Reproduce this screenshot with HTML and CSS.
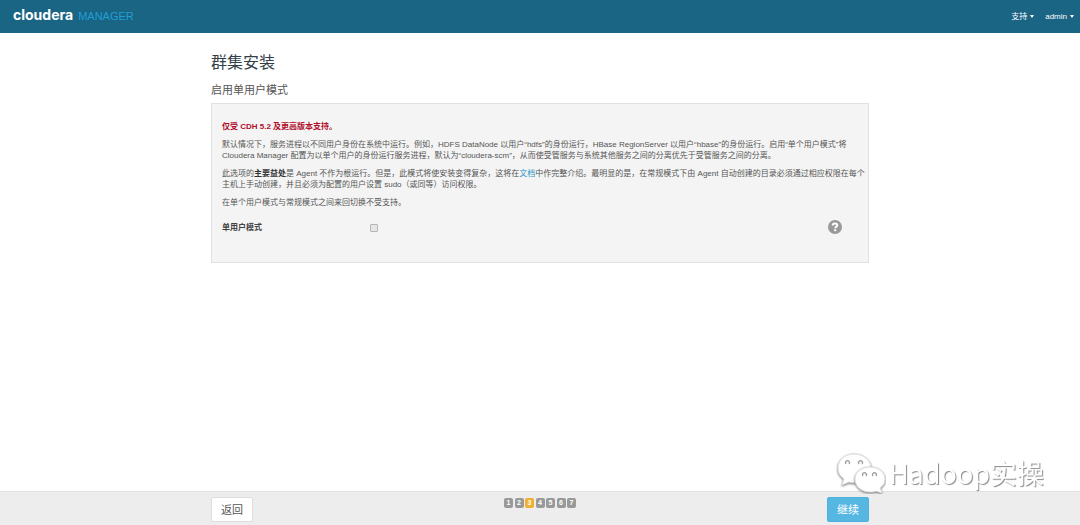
FILE: index.html
```html
<!DOCTYPE html>
<html lang="zh-CN">
<head>
<meta charset="utf-8">
<title>Cloudera Manager</title>
<link rel="stylesheet" href="styles.css">
</head>
<body>
<header class="topbar">
  <a class="brand" href="#"><span class="brand-name">cloudera</span><span class="brand-product">MANAGER</span></a>
  <nav class="topnav">
    <button class="menu" type="button">支持<span class="caret"></span></button>
    <button class="menu" type="button">admin<span class="caret"></span></button>
  </nav>
</header>

<main class="container content">
  <h1 class="title">群集安装</h1>
  <h2 class="subtitle">启用单用户模式</h2>
  <section class="panel">
    <p class="warning">仅受 CDH 5.2 及更高版本支持。</p>
    <p class="text">默认情况下，服务进程以不同用户身份在系统中运行。例如，HDFS DataNode 以用户“hdfs”的身份运行，HBase RegionServer 以用户“hbase”的身份运行。启用“单个用户模式”将 Cloudera Manager 配置为以单个用户的身份运行服务进程，默认为“cloudera-scm”，从而使受管服务与系统其他服务之间的分离优先于受管服务之间的分离。</p>
    <p class="text">此选项的<strong>主要益处</strong>是 Agent 不作为根运行。但是，此模式将使安装变得复杂，这将在<a class="link" href="#">文档</a>中作完整介绍。最明显的是，在常规模式下由 Agent 自动创建的目录必须通过相应权限在每个主机上手动创建，并且必须为配置的用户设置 sudo（或同等）访问权限。</p>
    <p class="text">在单个用户模式与常规模式之间来回切换不受支持。</p>
    <div class="field">
      <label class="field-label" for="single-user">单用户模式</label>
      <input class="checkbox" type="checkbox" id="single-user">
      <button class="help" type="button" aria-label="帮助">
        <svg viewBox="0 0 14 14" width="14" height="14"><circle cx="7" cy="7" r="7" fill="#999"/><path d="M4.700 5.500C4.700 4.100 5.600 3.400 7 3.400s2.300.7 2.300 1.900C9.300 6.700 7.200 6.600 7.200 8.300" fill="none" stroke="#fff" stroke-width="2"/><rect x="6.200" y="9.200" width="2" height="2" fill="#fff"/></svg>
      </button>
    </div>
  </section>
</main>

<footer class="footer">
  <div class="container actions">
    <button class="btn" type="button">返回</button>
    <ol class="steps">
      <li class="step">1</li><li class="step">2</li><li class="step current">3</li><li class="step">4</li><li class="step">5</li><li class="step">6</li><li class="step">7</li>
    </ol>
    <button class="btn primary" type="button">继续</button>
  </div>
</footer>

<div class="watermark">
  <svg class="watermark-icon" viewBox="0 0 50 42" width="50" height="42">
    <path class="bubble" d="M18 2C9 2 2 8 2 16c0 5 2 8 6 11l-2 6 7-3c3 1 7 1 10 0 7-2 12-7 12-14C35 8 27 2 18 2Z"/>
    <path class="bubble" d="M34 15c-8 0-15 5-15 12s6 13 15 13c2 0 4 0 6-1l6 2-2-5c3-2 5-5 5-9 0-7-7-12-15-12Z"/>
    <path fill="none" stroke="#999" stroke-width="1.300" d="M10 12a2 2 0 1 1 3 0M23 12a2 2 0 1 1 3 0M27 24a2 2 0 1 1 3 0M37 24a2 2 0 1 1 3 0"/>
  </svg>
  <span class="watermark-text">Hadoop实操</span>
</div>
</body>
</html>
```

FILE: styles.css
```css
* {
  box-sizing: border-box;
}

body {
  display: flex;
  flex-direction: column;
  min-height: 100vh;
  margin: 0;
  background: #fff;
  color: #555;
  font: 8px/11px "Liberation Sans", "Noto Sans CJK SC", sans-serif;
}

button {
  font-family: inherit;
  cursor: pointer;
}

.topbar {
  display: flex;
  align-items: center;
  justify-content: space-between;
  height: 33px;
  padding: 0 6px 0 13px;
  background: #1a6484;
}

.brand {
  display: flex;
  align-items: baseline;
  gap: 5px;
  padding-bottom: 2px;
  line-height: 16px;
  text-decoration: none;
}

.brand-name {
  color: #fff;
  font-family: Inter, sans-serif;
  font-size: 14px;
  font-weight: 700;
}

.brand-product {
  color: #209fd6;
  font-size: 11px;
}

.topnav {
  display: flex;
  gap: 11px;
}

.menu {
  display: flex;
  align-items: center;
  gap: 3px;
  padding: 0;
  border: 0;
  background: none;
  color: #fff;
  font-size: 8px;
  line-height: 11px;
}

.caret {
  border: 2px solid transparent;
  border-top: 3px solid #fff;
  border-bottom: 0;
}

.container {
  width: 100%;
  max-width: 658px;
  margin: 0 auto;
}

.content {
  flex: 1;
  padding-top: 19px;
}

.title {
  margin: 0 0 8px;
  color: #333f48;
  font-size: 16px;
  font-weight: 400;
  line-height: 22px;
}

.subtitle {
  margin: 0 0 5px;
  font-size: 11px;
  font-weight: 400;
  line-height: 16px;
}

.panel {
  padding: 17px 2px 28px 10px;
  border: 1px solid #e0e0e0;
  background: #f4f4f4;
}

.warning,
.text {
  margin: 0 0 7px;
}

.warning {
  color: #b00d2b;
  font-weight: 700;
}

.text strong {
  color: #333;
}

.link {
  color: #1c93c6;
  text-decoration: none;
}

.field {
  display: grid;
  grid-template-columns: 148px 1fr auto;
  align-items: center;
  margin-top: 12px;
  padding-right: 24px;
}

.field-label {
  color: #444;
  font-weight: 700;
}

.checkbox {
  width: 8px;
  height: 8px;
  margin: 1px 0 0;
  border: 1px solid #b5b5b5;
  border-radius: 1px;
  background: #e6e6e6;
  appearance: none;
}

.checkbox:checked {
  background: #209fd6;
}

.help {
  display: flex;
  padding: 0;
  border: 0;
  background: none;
}

.footer {
  padding: 5px 0 3px;
  border-top: 1px solid #e2e2e2;
  background: #ededed;
}

.actions {
  display: grid;
  grid-template-columns: 1fr auto 1fr;
  align-items: start;
}

.btn {
  justify-self: start;
  height: 25px;
  padding: 0 9px;
  border: 1px solid #ddd;
  border-radius: 2px;
  background: #fff;
  color: #555;
  font-size: 11px;
  line-height: 16px;
}

.primary {
  justify-self: end;
  border-color: #4fb0db;
  background: #56b7e2;
  color: #fff;
}

.steps {
  display: flex;
  justify-content: space-between;
  width: 72px;
  margin: 1px 0 0;
  padding: 0;
  list-style: none;
}

.step {
  width: 9px;
  border-radius: 2px;
  background: #999;
  color: #fff;
  font-size: 7px;
  font-weight: 700;
  line-height: 10px;
  text-align: center;
}

.current {
  background: #efb02e;
}

.watermark {
  position: fixed;
  right: 36px;
  bottom: 31px;
  display: flex;
  align-items: center;
  gap: 3px;
  pointer-events: none;
}

.bubble {
  fill: #fff;
  stroke: #ddd;
  filter: drop-shadow(0 1px 1px #777);
}

.watermark-text {
  color: #fff;
  font-family: "Noto Sans CJK SC", sans-serif;
  font-size: 27px;
  line-height: 40px;
  text-shadow: 1px 1px 1px #888;
}
```
